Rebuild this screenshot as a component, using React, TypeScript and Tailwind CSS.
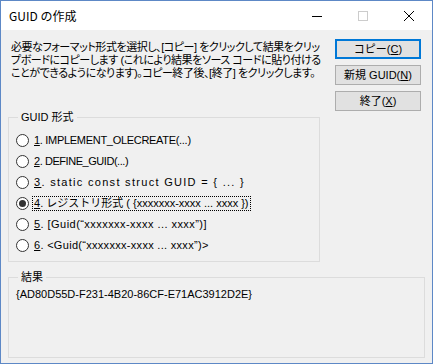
export default function App() {
  const rows: { n: string; text: string; cls: string; checked?: boolean }[] = [
    { n: "1", text: ". IMPLEMENT_OLECREATE(...)", cls: "tracking-[-0.3px]" },
    { n: "2", text: ". DEFINE_GUID(...)", cls: "tracking-[-0.45px]" },
    { n: "3", text: ". static const struct GUID = { ... }", cls: "tracking-[1.3px]" },
    { n: "4", text: ". レジストリ形式 ( {xxxxxxx-xxxx ... xxxx })", cls: "tracking-[0px]", checked: true },
    { n: "5", text: ". [Guid(“xxxxxxx-xxxx ... xxxx”)]", cls: "tracking-[0.45px]" },
    { n: "6", text: ". <Guid(“xxxxxxx-xxxx ... xxxx”)>", cls: "tracking-[0.3px]" },
  ];
  return (
    <div className="w-[433px] h-[364px] border border-[#5d88c6] flex flex-col bg-[#f0f0f0] font-['Liberation_Sans','Noto_Sans_CJK_JP',sans-serif] text-black overflow-hidden">
      {/* title bar */}
      <div className="h-[29px] bg-white flex items-center shrink-0">
        <span className="ml-[8px] text-[12px] font-['Noto_Sans_CJK_JP',sans-serif]">GUID の作成</span>
        <div className="ml-auto flex h-full">
          <div className="w-[46px] h-full flex items-center justify-center">
            <svg width="10" height="10" viewBox="0 0 10 10">
              <line x1="0" y1="5.5" x2="10" y2="5.5" stroke="#000" strokeWidth="1" />
            </svg>
          </div>
          <div className="w-[46px] h-full flex items-center justify-center">
            <svg width="10" height="10" viewBox="0 0 10 10">
              <rect x="0.5" y="0.5" width="9" height="9" fill="none" stroke="#cccccc" strokeWidth="1" />
            </svg>
          </div>
          <div className="w-[46px] h-full flex items-center justify-center">
            <svg width="10" height="10" viewBox="0 0 10 10">
              <path d="M0 0 L10 10 M10 0 L0 10" stroke="#000" strokeWidth="1" />
            </svg>
          </div>
        </div>
      </div>

      {/* content */}
      <div className="flex-1 flex flex-col">
        <div className="flex pt-[9px]">
          <div className="flex-1 pl-[10px] pt-[2px] text-[11px] leading-[13px] whitespace-nowrap tracking-[-0.45px] [font-feature-settings:'palt']">
            必要なフォーマット形式を選択し、[コピー] をクリックして結果をクリッ
            <br />
            プボードにコピーします (これにより結果をソース コードに貼り付ける
            <br />
            ことができるようになります)。コピー終了後、[終了] をクリックします。
          </div>
          <div className="flex flex-col gap-[6px] mr-[11px] text-[11px]">
            <div className="w-[86px] h-[20px] bg-[#e1e1e1] border-2 border-[#0078d7] flex items-center justify-center">
              コピー(<span className="underline">C</span>)
            </div>
            <div className="w-[86px] h-[20px] bg-[#e1e1e1] border border-[#adadad] flex items-center justify-center">
              新規 GUID(<span className="underline">N</span>)
            </div>
            <div className="w-[86px] h-[20px] bg-[#e1e1e1] border border-[#adadad] flex items-center justify-center">
              終了(<span className="underline">X</span>)
            </div>
          </div>
        </div>

        {/* GUID format group */}
        <div className="relative mt-[6px] ml-[7px] w-[312px] h-[145px] border border-[#dcdcdc]">
          <span className="absolute left-[9px] top-[-8px] px-[3px] bg-[#f0f0f0] text-[11px] leading-[14px]">GUID 形式</span>
          <div className="flex flex-col pt-[12px] pl-[7px]">
            {rows.map((r) => (
              <div key={r.n} className="h-[21px] flex items-center gap-[3px]">
                <div className="w-[13px] h-[13px] rounded-full border border-[#333333] bg-white flex items-center justify-center">
                  {r.checked && <div className="w-[7px] h-[7px] rounded-full bg-[#333333]" />}
                </div>
                <span
                  className={
                    "text-[11px] leading-[13px] px-[1px] whitespace-nowrap border " +
                    r.cls +
                    " " +
                    (r.checked ? "border-dotted border-black" : "border-transparent")
                  }
                >
                  <span className="underline">{r.n}</span>
                  {r.text}
                </span>
              </div>
            ))}
          </div>
        </div>

        {/* result group */}
        <div className="relative mt-[15px] ml-[7px] w-[417px] h-[81px] border border-[#dcdcdc]">
          <span className="absolute left-[9px] top-[-8px] px-[3px] bg-[#f0f0f0] text-[11px] leading-[14px]">結果</span>
          <div className="pt-[9px] pl-[7px] text-[11px] leading-[14px]">
            {"{AD80D55D-F231-4B20-86CF-E71AC3912D2E}"}
          </div>
        </div>
      </div>
    </div>
  );
}
